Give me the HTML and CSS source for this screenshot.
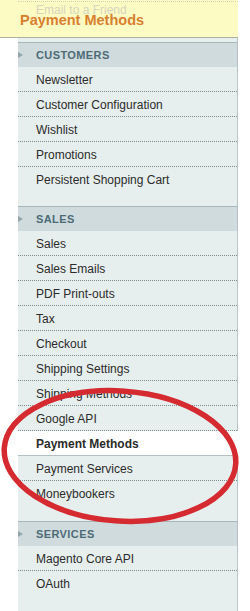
FILE: index.html
```html
<!DOCTYPE html>
<html lang="en">
<head>
    <meta charset="UTF-8">
    <meta name="viewport" content="width=device-width, initial-scale=1.0">
    <title>Payment Methods</title>
    <link rel="stylesheet" href="styles.css">
</head>
<body>
    <div class="page-title">
        <div class="ghost">Email to a Friend</div>
        <h1>Payment Methods</h1>
    </div>

    <div class="side-nav">
        <div class="section">
            <div class="section-head">Customers</div>
            <ul class="links">
                <li>Newsletter</li>
                <li>Customer Configuration</li>
                <li>Wishlist</li>
                <li>Promotions</li>
                <li>Persistent Shopping Cart</li>
            </ul>
        </div>
        <div class="section">
            <div class="section-head">Sales</div>
            <ul class="links">
                <li>Sales</li>
                <li>Sales Emails</li>
                <li>PDF Print-outs</li>
                <li>Tax</li>
                <li>Checkout</li>
                <li>Shipping Settings</li>
                <li>Shipping Methods</li>
                <li>Google API</li>
                <li class="active">Payment Methods</li>
                <li>Payment Services</li>
                <li>Moneybookers</li>
            </ul>
        </div>
        <div class="section">
            <div class="section-head">Services</div>
            <ul class="links">
                <li>Magento Core API</li>
                <li>OAuth</li>
            </ul>
        </div>
    </div>

    <svg class="circle" width="250" height="611" viewBox="0 0 250 611">
        <ellipse cx="120" cy="456" rx="116" ry="65" transform="rotate(4 120 456)"
                 fill="none" stroke="#d42a30" stroke-width="5.5"/>
    </svg>
</body>
</html>
```

FILE: styles.css
```css
body{
    margin: 0;
    background: #fff;
    font-family: "Liberation Sans", Arial, sans-serif;
    position: relative;
    min-height: 611px;
    overflow: hidden;
}
.page-title{
    position: relative;
    width: 238px;
    height: 37px;
    background-color: #fdfbc4;
    border-bottom: 1px solid #aeb1a4;
}
.ghost{
    position: absolute;
    left: 18px;
    top: 1px;
    width: 220px;
    padding-left: 18px;
    box-sizing: border-box;
    border-top: 1px dotted #d4d3c2;
    font-size: 12px;
    line-height: 17px;
    color: #d6d4bd;
}
h1{
    position: relative;
    margin: 0;
    padding-left: 20px;
    font-size: 14.5px;
    line-height: 41px;
    font-weight: bold;
    color: #d8802e;
}
.side-nav{
    margin-left: 18px;
    width: 219px;
    padding-top: 4px;
    background-color: #e7eeee;
    border-right: 1px solid #b5c4c6;
    min-height: 580px;
}
.section-head{
    position: relative;
    height: 24px;
    line-height: 25px;
    padding-left: 18px;
    border-top: 1px solid #a7b6b9;
    background-color: #cfdbdd;
    color: #4d6b76;
    font-size: 11px;
    font-weight: bold;
    text-transform: uppercase;
    letter-spacing: 0.4px;
}
.section-head::before{
    content: "";
    position: absolute;
    left: 0;
    top: 9px;
    border-top: 3.5px solid transparent;
    border-bottom: 3.5px solid transparent;
    border-left: 5px solid #93a6ab;
}
.links{
    list-style: none;
    margin: 0;
    padding: 0 0 16px 0;
}
.section:first-child .links{
    padding-bottom: 15px;
}
.links li{
    height: 24px;
    line-height: 26px;
    padding-left: 18px;
    border-bottom: 1px dotted #7f8c8f;
    font-size: 12px;
    color: #2b2b2b;
}
.links li:last-child{
    border-bottom: none;
}
.links li.active{
    background-color: #fff;
    font-weight: bold;
    margin-right: -1px;
    border-bottom: 1px solid #b3bfc2;
}
.circle{
    position: absolute;
    left: 0;
    top: 0;
    pointer-events: none;
}
```
